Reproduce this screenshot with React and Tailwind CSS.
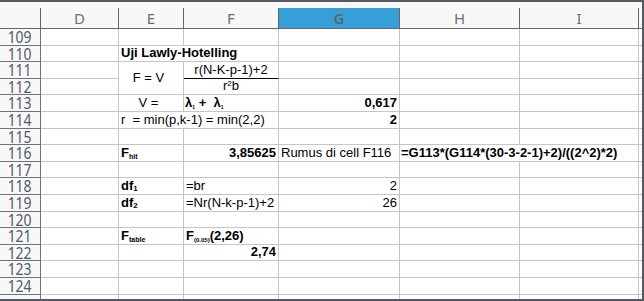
import React from 'react'

const GRID = 'grid grid-cols-[41px_78px_65px_95px_121px_120px_119px_1fr]'
const FONT = "font-['Liberation_Sans',Arial,sans-serif]"

const Sub = ({ children, size = 'text-[7px]' }) => (
  <span className={`${size} leading-none`}>{children}</span>
)

// cell: text left by default; right / center via align
const Cell = ({ children, align = 'left', bold, span, tall, under, className = '' }) => {
  const justify =
    align === 'right' ? 'justify-end' : align === 'center' ? 'justify-center' : 'justify-start'
  return (
    <div
      className={`
        flex whitespace-nowrap border-r border-b border-[#c6c6c6]
        px-[2px] text-[13px] leading-[14px] text-black
        ${tall ? 'row-span-2 items-center' : 'items-end pb-[1px]'}
        ${span ? 'col-span-2' : ''}
        ${under ? 'border-b-black' : ''}
        ${bold ? 'font-bold' : ''}
        ${justify} ${className}
      `}
    >
      {children}
    </div>
  )
}

const RowHead = ({ n }) => (
  <div className="flex items-center justify-center border-r border-b border-[#6b7380] bg-[#f8f8f8]">
    <span className="inline-block scale-x-[0.82] font-['Noto_Sans'] text-[17px] leading-[14px] text-[#4f5966]">
      {n}
    </span>
  </div>
)

const Tail = () => <div className="border-b border-[#c6c6c6]" />

const Empty = () => <Cell />

const rows = [
  { n: 109, cells: [<Empty />, <Empty />, <Empty />, <Empty />, <Empty />, <Empty />] },
  {
    n: 110,
    cells: [
      <Empty />,
      <Cell span bold>Uji Lawly-Hotelling</Cell>,
      <Empty />,
      <Empty />,
      <Empty />,
    ],
  },
  {
    n: 111,
    cells: [
      <Empty />,
      <Cell tall align="center" className="pr-[7px]">F = V</Cell>,
      <Cell align="center" under>r(N-K-p-1)+2</Cell>,
      <Empty />,
      <Empty />,
      <Empty />,
    ],
  },
  {
    n: 112,
    cells: [
      <Empty />,
      <Cell align="center">
        r<span className="text-[8px] leading-none self-start mt-[1px]">2</span>b
      </Cell>,
      <Empty />,
      <Empty />,
      <Empty />,
    ],
  },
  {
    n: 113,
    cells: [
      <Empty />,
      <Cell align="center" className="pr-[7px]">V =</Cell>,
      <Cell bold className="pl-[1px]">
        λ<Sub size="text-[5px]">1</Sub>
        <span className="whitespace-pre"> +  </span>λ<Sub size="text-[5px]">1</Sub>
      </Cell>,
      <Cell bold align="right">0,617</Cell>,
      <Empty />,
      <Empty />,
    ],
  },
  {
    n: 114,
    cells: [
      <Empty />,
      <Cell span className="whitespace-pre">r  = min(p,k-1) = min(2,2)</Cell>,
      <Cell bold align="right">2</Cell>,
      <Empty />,
      <Empty />,
    ],
  },
  { n: 115, cells: [<Empty />, <Empty />, <Empty />, <Empty />, <Empty />, <Empty />] },
  {
    n: 116,
    cells: [
      <Empty />,
      <Cell bold>
        F<Sub>hit</Sub>
      </Cell>,
      <Cell bold align="right">3,85625</Cell>,
      <Cell>Rumus di cell F116</Cell>,
      <Cell span bold className="pl-[1px]">=G113*(G114*(30-3-2-1)+2)/((2^2)*2)</Cell>,
    ],
  },
  { n: 117, cells: [<Empty />, <Empty />, <Empty />, <Empty />, <Empty />, <Empty />] },
  {
    n: 118,
    cells: [
      <Empty />,
      <Cell bold>
        df<Sub size="text-[8px]">1</Sub>
      </Cell>,
      <Cell>=br</Cell>,
      <Cell align="right">2</Cell>,
      <Empty />,
      <Empty />,
    ],
  },
  {
    n: 119,
    cells: [
      <Empty />,
      <Cell bold>
        df<Sub size="text-[8px]">2</Sub>
      </Cell>,
      <Cell>=Nr(N-k-p-1)+2</Cell>,
      <Cell align="right">26</Cell>,
      <Empty />,
      <Empty />,
    ],
  },
  { n: 120, cells: [<Empty />, <Empty />, <Empty />, <Empty />, <Empty />, <Empty />] },
  {
    n: 121,
    cells: [
      <Empty />,
      <Cell bold>
        F<Sub>table</Sub>
      </Cell>,
      <Cell bold>
        F<Sub size="text-[6px]">(0.05)</Sub>(2,26)
      </Cell>,
      <Empty />,
      <Empty />,
      <Empty />,
    ],
  },
  {
    n: 122,
    cells: [<Empty />, <Empty />, <Cell bold align="right">2,74</Cell>, <Empty />, <Empty />, <Empty />],
  },
  { n: 123, cells: [<Empty />, <Empty />, <Empty />, <Empty />, <Empty />, <Empty />] },
  { n: 124, cells: [<Empty />, <Empty />, <Empty />, <Empty />, <Empty />, <Empty />] },
]

const HeadCell = ({ label, active }) => (
  <div
    className={`flex h-[20px] items-center justify-center border-r border-[#5f6670] font-['Noto_Sans'] text-[15px] leading-none ${
      active ? 'bg-[#379fd7] font-semibold text-[#5b6673]' : 'text-[#6b7078]'
    }`}
  >
    {label}
  </div>
)

export default function App() {
  return (
    <div className={`flex h-[301px] w-[644px] flex-col overflow-hidden border-t-2 border-r-2 border-b-2 border-[#555a60] bg-white ${FONT}`}>
      <div className="h-[27px] shrink-0 border-b border-[#5f6670] bg-[#f8f8f8] pt-[6px]">
        <div className={GRID}>
          <HeadCell label="" />
          <HeadCell label="D" />
          <HeadCell label="E" />
          <HeadCell label="F" />
          <HeadCell label="G" active />
          <HeadCell label="H" />
          <HeadCell label="I" />
          <div />
        </div>
      </div>
      <div
        className={`${GRID} grid-rows-[17px_16px_17px_16px_17px_17px_16px_17px_16px_17px_17px_16px_17px_16px_17px_17px_1fr] flex-1`}
      >
        {rows.map((r) => (
          <React.Fragment key={r.n}>
            <RowHead n={r.n} />
            {r.cells.map((c, i) => (
              <React.Fragment key={i}>{c}</React.Fragment>
            ))}
            <Tail />
          </React.Fragment>
        ))}
        <div className="border-r border-[#6b7380] bg-[#f8f8f8]" />
        <div className="border-r border-[#c6c6c6]" />
        <div className="border-r border-[#c6c6c6]" />
        <div className="border-r border-[#c6c6c6]" />
        <div className="border-r border-[#c6c6c6]" />
        <div className="border-r border-[#c6c6c6]" />
        <div className="border-r border-[#c6c6c6]" />
        <div />
      </div>
    </div>
  )
}
